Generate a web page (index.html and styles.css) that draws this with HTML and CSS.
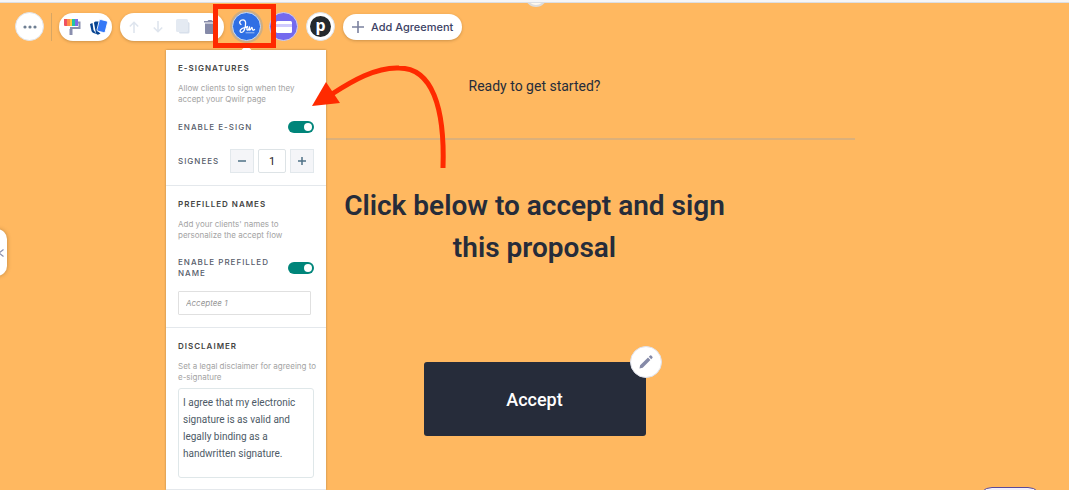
FILE: index.html
```html
<!DOCTYPE html>
<html lang="en">
<head>
    <meta charset="utf-8">
    <meta name="viewport" content="width=device-width, initial-scale=1">
    <title>Proposal editor</title>
    <link rel="stylesheet" href="styles.css">
</head>
<body>
    <div class="top-strip"></div>
    <main class="page">
        <span class="top-handle"></span>

        <div class="toolbar">
            <button class="round-button" aria-label="More">
                <svg width="14" height="4" viewBox="0 0 14 4" fill="#6f7f93"><circle cx="2" cy="2" r="1.6"/><circle cx="7" cy="2" r="1.6"/><circle cx="12" cy="2" r="1.6"/></svg>
            </button>
            <span class="divider"></span>
            <div class="pill">
                <button class="icon-button" aria-label="Style">
                    <svg width="18" height="18" viewBox="0 0 18 18">
                        <path d="M1 1h3v7H2a1 1 0 0 1-1-1z" fill="#f0525f"/>
                        <path d="M4 1h3v7H4z" fill="#ff8c4a"/>
                        <path d="M7 1h2v7H7z" fill="#ffcf3d"/>
                        <path d="M9 1h3v7H9z" fill="#22c4a6"/>
                        <path d="M12 1h3v7h-3z" fill="#7b6be8"/>
                        <path d="M15 4.500h1.500V10H8v3" fill="none" stroke="#8a8fae" stroke-width="2"/>
                        <path d="M6.500 11h3v6h-3z" fill="#8a8fae"/>
                    </svg>
                </button>
                <button class="icon-button" aria-label="Layouts">
                    <svg width="19" height="18" viewBox="0 0 19 18">
                        <path d="M1 6l2.500-1 1 7 3 4-3-1q-1.500-.5-2-2z" fill="#064391"/>
                        <path d="M5 5q0-1.500 1.500-1.500H10L8.500 13l3 2.500-2 1q-1.500.5-2.500-1z" fill="#064391"/>
                        <rect x="9" y="2" width="8.500" height="12" rx="1.500" transform="rotate(14 13 8)" fill="#3478f6" stroke="#fff" stroke-width=".8"/>
                    </svg>
                </button>
            </div>
            <div class="pill pill-wide">
                <button class="icon-button" aria-label="Move up">
                    <svg width="10" height="12" viewBox="0 0 10 12" fill="none" stroke="#dfe5ee" stroke-width="1.600"><path d="M5 12V1.500M.8 5.500L5 1.300l4.200 4.200"/></svg>
                </button>
                <button class="icon-button" aria-label="Move down">
                    <svg width="10" height="12" viewBox="0 0 10 12" fill="none" stroke="#dfe5ee" stroke-width="1.600"><path d="M5 0v10.500M.8 6.500L5 10.700l4.200-4.200"/></svg>
                </button>
                <button class="icon-button" aria-label="Duplicate">
                    <svg width="14" height="15" viewBox="0 0 14 15"><rect x="3" y="3" width="10.500" height="11.500" rx="1.500" fill="#d8e0eb"/><rect x="0" y="0" width="12" height="13" rx="1.500" fill="#e4eaf2"/></svg>
                </button>
                <button class="icon-button" aria-label="Delete">
                    <svg width="12" height="14" viewBox="0 0 12 14" fill="#858aa8"><path d="M0 1h3.500l1-1h3l1 1H12v1.500H0zM1 3.500h10V13a1 1 0 0 1-1 1H2a1 1 0 0 1-1-1z"/></svg>
                </button>
            </div>
            <button class="round-button esign" aria-label="E-signatures">
                <svg width="20" height="20" viewBox="0 0 20 20" fill="none" stroke="#fff" stroke-width="1.300" stroke-linecap="round" stroke-linejoin="round">
                    <path d="M4 7.500C1.500 6 3 2.800 6 2.800c3.200 0 2.800 4 2.200 7.200C7.600 13.500 6 16 4 15.300c-2-1-.5-3.800 3.500-4.600 1.200-.3 2.300-.7 3-1.200-.6 1.500-1 3.700 0 3.700s1.700-2 2-3.200c-.2 1.300-.2 3.200.4 3.200.8 0 1.200-2.700 2-2.700.7 0 .1 2.700 1 2.700.6 0 1-.3 1.600-.8"/>
                    <path d="M9 15.800h8" stroke-width=".8" opacity=".7"/>
                </svg>
            </button>
            <button class="round-button payment" aria-label="Payment">
                <svg width="16" height="12" viewBox="0 0 16 12"><rect width="16" height="12" rx="1.500" fill="#fff"/><path d="M0 3h16v3H0z" fill="#cfcafd"/></svg>
            </button>
            <button class="round-button integration" aria-label="Pipedrive"><b>p</b></button>
            <button class="add-button">
                <svg width="12" height="12" viewBox="0 0 12 12" stroke="#7b819f" stroke-width="1.600"><path d="M6 0v12M0 6h12"/></svg>
                Add Agreement
            </button>
        </div>

        <div class="content">
            <p class="intro">Ready to get started?</p>
            <hr class="rule">
            <h1 class="title">Click below to accept and sign this proposal</h1>
            <div class="accept-wrap">
                <button class="accept">Accept</button>
                <button class="edit" aria-label="Edit button">
                    <svg width="16" height="16" viewBox="0 0 16 16" fill="#858aa8"><path d="M1.500 14.500l.6-3.300L10 3.600l2.400 2.400-7.700 7.700zM10.800 2.800l1.300-1.200q.6-.6 1.200 0l1.100 1.100q.6.600 0 1.200l-1.200 1.300z"/></svg>
                </button>
            </div>
        </div>

        <aside class="popover">
            <section class="section">
                <h2 class="section-title">E-signatures</h2>
                <p class="hint">Allow clients to sign when they accept your Qwilr page</p>
                <div class="row">
                    <label class="label" for="enable-esign">Enable e-sign</label>
                    <input class="toggle" type="checkbox" id="enable-esign" checked>
                </div>
                <div class="row">
                    <label class="label" for="signees">Signees</label>
                    <div class="stepper">
                        <button class="step" aria-label="Fewer signees"><svg width="8" height="8" viewBox="0 0 8 8"><path d="M0 4h8"/></svg></button>
                        <input class="count" type="text" id="signees" value="1">
                        <button class="step" aria-label="More signees"><svg width="8" height="8" viewBox="0 0 8 8"><path d="M0 4h8M4 0v8"/></svg></button>
                    </div>
                </div>
            </section>
            <section class="section">
                <h2 class="section-title">Prefilled names</h2>
                <p class="hint">Add your clients' names to personalize the accept flow</p>
                <div class="row">
                    <label class="label" for="enable-prefilled">Enable prefilled name</label>
                    <input class="toggle" type="checkbox" id="enable-prefilled" checked>
                </div>
                <input class="acceptee" type="text" placeholder="Acceptee 1" aria-label="Acceptee 1">
            </section>
            <section class="section">
                <h2 class="section-title" id="disclaimer-title">Disclaimer</h2>
                <p class="hint">Set a legal disclaimer for agreeing to e-signature</p>
                <textarea class="disclaimer" aria-labelledby="disclaimer-title">I agree that my electronic signature is as valid and legally binding as a handwritten signature.</textarea>
            </section>
        </aside>

        <button class="side-tab" aria-label="Close panel">
            <svg width="8" height="8" viewBox="0 0 8 8" fill="none" stroke="#8a8fae" stroke-width="1.200"><path d="M0 4h3M7.500 .5L3 4l4.500 3.500"/></svg>
        </button>
        <span class="help-tab"></span>

        <!-- highlight box and arrow -->
        <span class="highlight"></span>
        <svg class="arrow" width="140" height="110" viewBox="0 0 140 110">
            <path d="M132 107C134 46 121 7 88 7C65 6 41 20 21 33" fill="none" stroke="#ff2a00" stroke-width="5"/>
            <path d="M1 45L15 21L29 42z" fill="#ff2a00"/>
        </svg>
    </main>
</body>
</html>
```
FILE: styles.css
```css
:root {
    --orange: #ffb860;
    --ink: #262c3a;
    --teal: #00857a;
    --red: #ff2a00;
    --line: #e4e8ec;
}

* {
    box-sizing: border-box;
}

body {
    margin: 0;
    min-height: 100vh;
    display: flex;
    flex-direction: column;
    font-family: Roboto, sans-serif;
    color: var(--ink);
    overflow: hidden;
}

button {
    padding: 0;
    border: 0;
    background: none;
    font: inherit;
    color: inherit;
    cursor: pointer;
}

svg {
    display: block;
    flex: none;
}

h1,
h2,
p {
    margin: 0;
}

.top-strip {
    height: 3px;
    background: #f6f6f7;
    border-bottom: 1px solid #dcdfe3;
}

.page {
    position: relative;
    flex: 1;
    background: var(--orange);
    overflow: hidden;
}

.top-handle {
    position: absolute;
    top: -18px;
    left: 50%;
    width: 22px;
    height: 22px;
    margin-left: -10px;
    border: 2px solid #dcdcdc;
    border-radius: 50%;
    background: #fff8ee;
}

/* Toolbar */
.toolbar {
    display: flex;
    align-items: center;
    gap: 8px;
    height: 47px;
    padding: 0 15px;
}

.round-button {
    display: flex;
    align-items: center;
    justify-content: center;
    flex: none;
    width: 29px;
    height: 29px;
    border: 1px solid #dfe3ea;
    border-radius: 50%;
    background: #fff;
}

.divider {
    width: 1px;
    height: 28px;
    margin: 0 -1px;
    background: #d8a663;
}

.pill {
    display: flex;
    align-items: center;
    justify-content: space-between;
    width: 53px;
    height: 28px;
    padding: 0 4px;
    border-radius: 14px;
    background: #fff;
    box-shadow: 0 1px 3px rgba(90, 60, 20, 0.3);
}

.pill-wide {
    width: 104px;
    padding: 0 8px 0 9px;
}

.esign {
    border: 1px solid #c9dcf7;
    background: #2f6fe4;
    box-shadow: 0 0 0 2px #d0ad80;
}

.payment {
    border-color: #cfd0ee;
    background: #7469ee;
}

.integration b {
    width: 21px;
    height: 21px;
    border-radius: 50%;
    background: #25292c;
    color: #fff;
    font: bold 16px/18px "Noto Sans", sans-serif;
    text-align: center;
}

.add-button {
    display: flex;
    align-items: center;
    gap: 7px;
    height: 26px;
    padding: 0 9px;
    border-radius: 13px;
    background: #fff;
    box-shadow: 0 1px 3px rgba(90, 60, 20, 0.3);
    font: 500 11px Inter, sans-serif;
    color: #3c4264;
}

/* Proposal content */
.content {
    display: flex;
    flex-direction: column;
    align-items: center;
    max-width: 640px;
    margin: 0 auto;
    padding-top: 26px;
    text-align: center;
}

.intro {
    font-size: 14px;
    line-height: 20px;
}

.rule {
    width: 100%;
    height: 2px;
    margin: 42px 0 45px;
    border: 0;
    background: #dcb07a;
}

.title {
    max-width: 400px;
    font-size: 28px;
    font-weight: 600;
    line-height: 42px;
}

.accept-wrap {
    position: relative;
    margin-top: 93px;
}

.accept {
    width: 222px;
    height: 74px;
    border-radius: 3px;
    background: var(--ink);
    font-size: 18px;
    font-weight: 500;
    color: #fff;
}

.edit {
    position: absolute;
    top: -16px;
    right: -16px;
    display: flex;
    align-items: center;
    justify-content: center;
    width: 32px;
    height: 32px;
    border: 1px solid #dfe1ea;
    border-radius: 50%;
    background: #fff;
}

/* E-signature settings */
.popover {
    position: absolute;
    top: 47px;
    left: 166px;
    width: 160px;
    background: #fff;
    box-shadow: 0 0 2px rgba(60, 60, 40, 0.4);
}

.popover::before {
    content: "";
    position: absolute;
    top: -3px;
    left: 76px;
    width: 9px;
    height: 9px;
    border-radius: 2px;
    background: #fff;
    transform: rotate(45deg);
}

.section {
    padding: 13px 12px 12px;
    border-bottom: 1px solid var(--line);
}

.section:last-child {
    padding-bottom: 11px;
}

.section-title,
.label {
    font-family: Inter, sans-serif;
    font-size: 8px;
    font-weight: 600;
    line-height: 11px;
    letter-spacing: 1px;
    text-transform: uppercase;
    color: #444;
}

.label {
    font-weight: 500;
    color: #565c6a;
}

.hint {
    margin: 9px -8px 0 0;
    padding-right: 4px;
    font-family: Inter, sans-serif;
    font-size: 8px;
    line-height: 11px;
    color: #a3a3a3;
}

.row {
    display: flex;
    align-items: center;
    justify-content: space-between;
    gap: 8px;
    margin-top: 16px;
}

.toggle {
    appearance: none;
    display: flex;
    flex: none;
    align-items: center;
    justify-content: flex-end;
    width: 26px;
    height: 12px;
    margin: 0;
    padding: 2px;
    border-radius: 6px;
    background: var(--teal);
}

.toggle::before {
    content: "";
    width: 8px;
    height: 8px;
    border-radius: 50%;
    background: #fff;
}

.stepper {
    display: flex;
    gap: 4px;
}

.step {
    display: flex;
    align-items: center;
    justify-content: center;
    width: 24px;
    height: 24px;
    border: 1px solid #e2e8ec;
    background: #f4f5f8;
}

.step svg {
    stroke: #4f7186;
    stroke-width: 1.5;
}

.count {
    width: 28px;
    height: 24px;
    padding: 0;
    border: 1px solid #dde3e6;
    border-radius: 2px;
    font: 11px Roboto, sans-serif;
    text-align: center;
    color: #222;
}

.acceptee {
    display: block;
    width: 133px;
    height: 24px;
    margin-top: 12px;
    padding: 0 7px;
    border: 1px solid #e0e0e0;
    border-radius: 1px;
    font: italic 8px Inter, sans-serif;
}

.acceptee::placeholder {
    color: #969696;
}

.disclaimer {
    display: block;
    width: 100%;
    height: 90px;
    margin-top: 5px;
    padding: 5px 4px;
    border: 1px solid #dfe7e9;
    border-radius: 3px;
    font: 10px/17px Roboto, sans-serif;
    color: #4d5a66;
    resize: none;
}

/* Edge tabs */
.side-tab {
    position: absolute;
    top: 226px;
    left: -20px;
    display: flex;
    align-items: center;
    justify-content: flex-end;
    width: 27px;
    height: 47px;
    padding-right: 3px;
    border-radius: 10px;
    background: #fff;
    box-shadow: 0 0 4px rgba(90, 60, 20, 0.4);
}

.help-tab {
    position: absolute;
    right: 26px;
    bottom: -27px;
    width: 66px;
    height: 30px;
    border: 1px solid #5b4a9a;
    border-radius: 15px;
    background: #f3f1fb;
}

/* Annotations */
.highlight {
    position: absolute;
    top: 1px;
    left: 213px;
    width: 63px;
    height: 44px;
    border: 5px solid var(--red);
}

.arrow {
    position: absolute;
    top: 58px;
    left: 311px;
}
```
